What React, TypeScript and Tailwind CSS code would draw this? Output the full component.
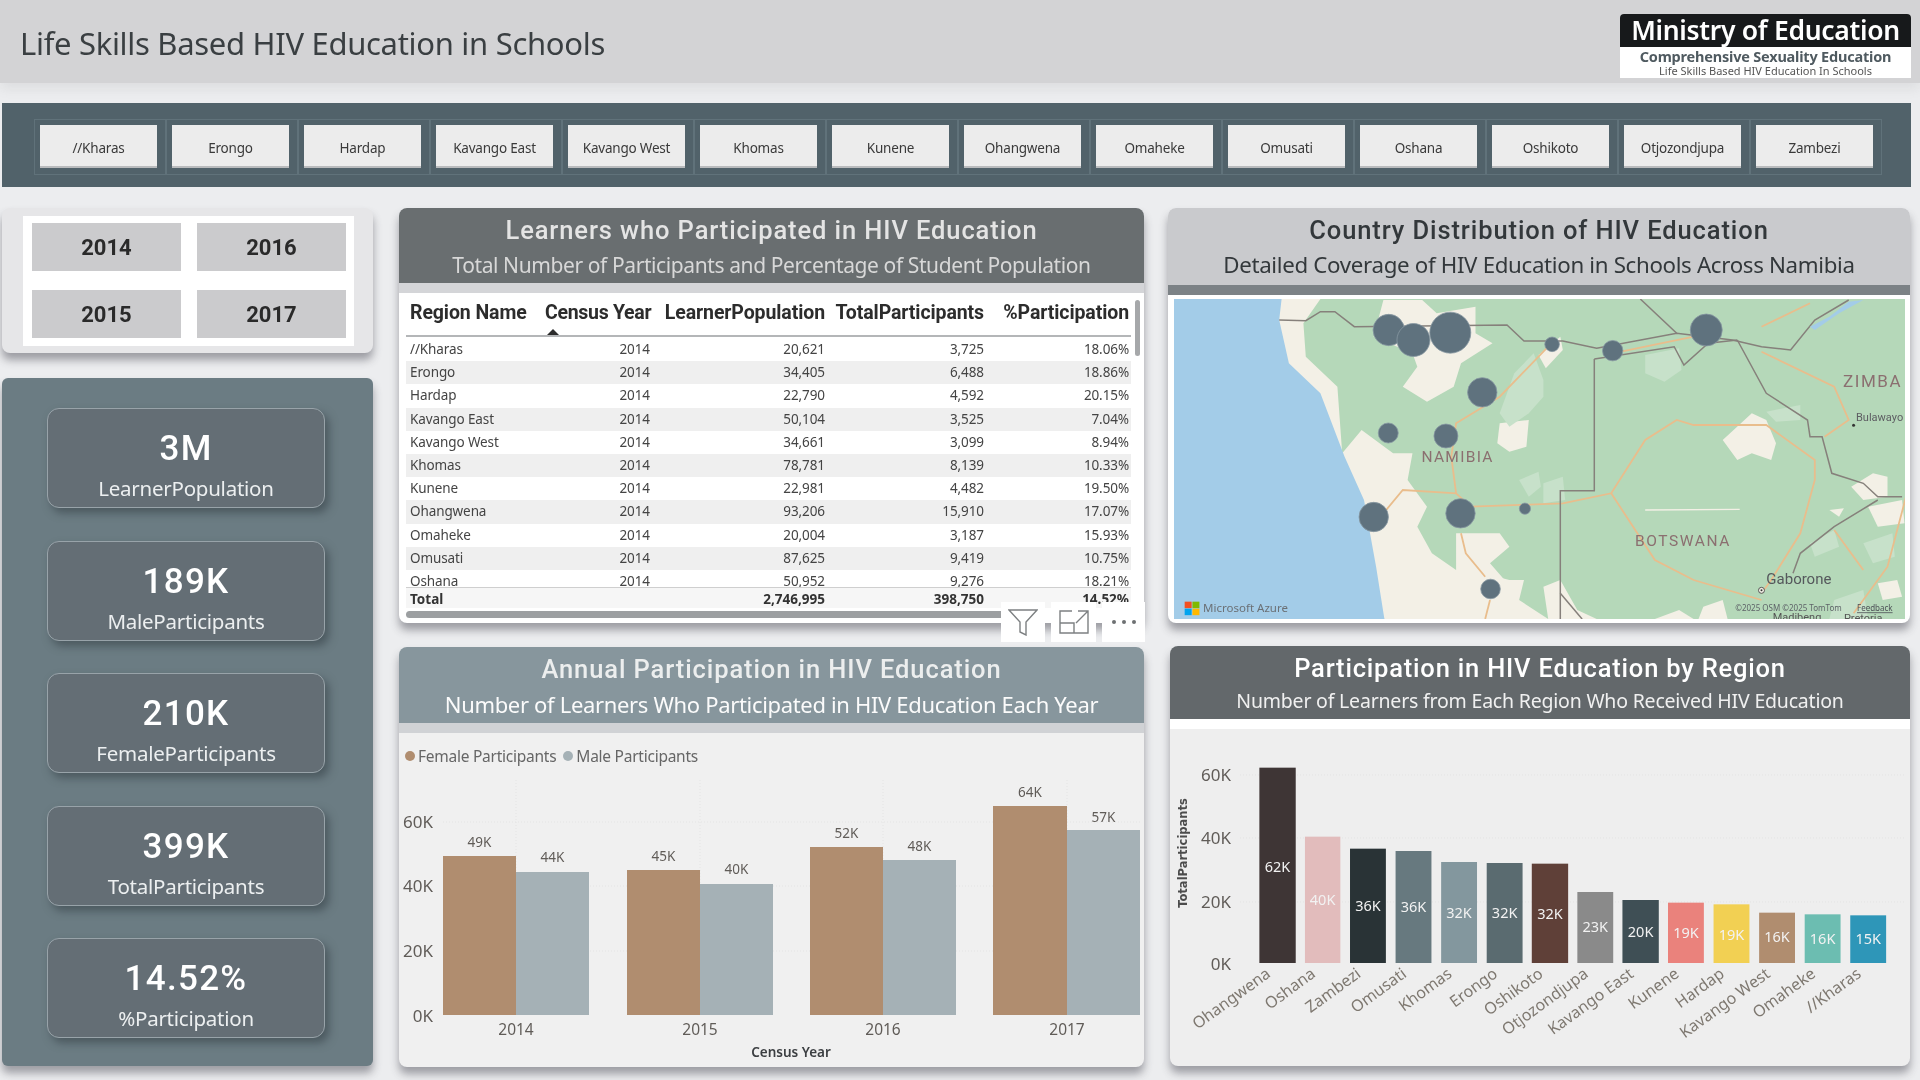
import React from "react";

const regions = ["//Kharas","Erongo","Hardap","Kavango East","Kavango West","Khomas","Kunene","Ohangwena","Omaheke","Omusati","Oshana","Oshikoto","Otjozondjupa","Zambezi"];

const rows = [
  ["//Kharas","20,621","3,725","18.06%"],["Erongo","34,405","6,488","18.86%"],["Hardap","22,790","4,592","20.15%"],
  ["Kavango East","50,104","3,525","7.04%"],["Kavango West","34,661","3,099","8.94%"],["Khomas","78,781","8,139","10.33%"],
  ["Kunene","22,981","4,482","19.50%"],["Ohangwena","93,206","15,910","17.07%"],["Omaheke","20,004","3,187","15.93%"],
  ["Omusati","87,625","9,419","10.75%"],["Oshana","50,952","9,276","18.21%"],
];

const kpis = [["3M","LearnerPopulation"],["189K","MaleParticipants"],["210K","FemaleParticipants"],["399K","TotalParticipants"],["14.52%","%Participation"]];

// map drawing: coordinates measured on a 2.063 x 3 grid
const mx = (x: number) => (x - 28) / 2.063;
const my = (y: number) => (y - 57) / 3;
const path = (p: number[], close = false) => {
  let s = "";
  for (let i = 0; i < p.length; i += 2) s += (i ? "L" : "M") + mx(p[i]).toFixed(1) + " " + my(p[i + 1]).toFixed(1);
  return s + (close ? "Z" : "");
};
const ocean = [28,57,250,57,245,120,265,250,330,340,380,530,420,660,445,860,462,1017,28,1017];
const sand = [
  [250,57,330,57,295,130,300,230,365,320,375,520,415,450,480,520,520,520,510,600,550,680,530,740,560,820,610,870,610,760,700,760,720,800,680,850,710,900,750,900,740,960,800,1017,462,1017,300,600,200,60],
  [460,60,540,60,570,100,650,80,650,160,685,190,620,250,605,320,550,365,500,320,530,260,520,220,440,170],
  [700,430,760,420,755,500,720,515,695,490],
  [780,225,800,200,825,170,830,210,795,265],
  [1160,480,1220,400,1250,420,1270,490,1260,540,1220,520,1190,540],
  [1425,620,1470,580,1500,590,1500,650,1450,660],
  [1460,680,1530,660,1535,730,1480,740],
  [1380,690,1410,685,1400,710],
  [790,920,825,900,860,990,900,1017,800,1017],
  [1480,910,1520,900,1530,950,1490,960],
  [1120,980,1160,960,1170,1017,1110,1017],
  [1020,1017,1070,990,1100,1017],
  [640,870,720,900,700,960,630,950],
  [1000,688,1195,686,1195,690,1000,692],
];
const pale = [
  [730,280,770,220,790,300,790,350,760,400,720,440,700,400],
  [1000,225,1070,205,1075,270,1040,305,1000,280],
  [740,600,780,575,785,620,760,650],
  [790,610,830,590,835,660,790,670],
  [1250,395,1320,375,1320,420,1270,425],
  [1340,790,1390,750,1400,800,1350,830],
  [1450,790,1510,760,1515,830,1470,850],
  [1390,960,1450,930,1460,1017,1380,1017],
];
const borders = [
  [245,120,300,122,330,95,360,95,400,140,715,135,750,183,830,183,900,205,1065,160,1180,180,1240,200,1300,210,1350,120,1420,60],
  [895,237,1060,200,1080,255,1130,190,1190,180],
  [895,237,895,632,825,632,825,1017],
  [990,57,1065,160],
  [1190,180,1250,340,1335,420,1340,470,1365,470,1385,580,1450,610,1480,650,1530,650],
  [1480,660,1390,740,1320,820,1305,880],
  [825,940,870,1017],
];
const roads = [
  [800,200,700,350,610,430,600,530,610,640,500,630,460,700],
  [610,640,640,680,830,670,930,640,1000,480,1065,420,1100,435,1250,435,1350,540,1350,600,1320,760,1260,900,1240,940],
  [930,640,1020,840,1100,900,1240,960],
  [1240,215,1390,320,1420,420,1370,470],
  [620,760,630,820,670,890],
  [680,960,670,1017],
  [1430,1000,1500,860,1540,640],
  [1390,750,1450,870],
  [950,215,1100,170],
  [1240,140,1340,70],
];
const bubbles = [[471,150,15.7],[522,180,16.5],[598,158,20.5],[808,193,7.3],[933,212,10.2],[1126,150,16],[664,337,14.7],[470,459,10],[589,468,12],[440,711,14.7],[619,700,14.7],[752,686,5.6],[681,927,9.8]];

const annual = [
  { year: "2014", f: [443, 516, 856, "49K", 842], m: [516, 589, 872, "44K", 857] },
  { year: "2015", f: [627, 700, 870, "45K", 856], m: [700, 773, 884, "40K", 869] },
  { year: "2016", f: [810, 883, 847, "52K", 833], m: [883, 956, 860, "48K", 846] },
  { year: "2017", f: [993, 1067, 806, "64K", 792], m: [1067, 1140, 830, "57K", 817] },
] as const;

const regionBars: [string, number, number, number, string, number, string][] = [
  ["Ohangwena",205,280,383,"62K",680,"#3e3535"],["Oshana",299,372,590,"40K",780,"#e2bcbc"],["Zambezi",392,466,626,"36K",797,"#293336"],
  ["Omusati",486,560,633,"36K",800,"#67797f"],["Khomas",580,654,666,"32K",820,"#83979e"],["Erongo",674,748,669,"32K",820,"#5a6b70"],
  ["Oshikoto",767,842,671,"32K",823,"#5f4038"],["Otjozondjupa",861,935,756,"23K",862,"#8a8a8a"],["Kavango East",954,1029,780,"20K",877,"#3f4f55"],
  ["Kunene",1048,1122,788,"19K",880,"#ea827c"],["Hardap",1142,1216,793,"19K",884,"#f2d053"],["Kavango West",1236,1310,818,"16K",892,"#b08d6f"],
  ["Omaheke",1330,1404,823,"16K",896,"#6cbdb1"],["//Kharas",1424,1498,826,"15K",897,"#2e96b8"],
];
const rx = (x: number) => x / 2.063;
const ry = (y: number) => y / 3;

const shadow = "shadow-[0_7px_8px_rgba(60,60,70,0.45)]";
const titleFont = "font-['Roboto',sans-serif]";
const bodyFont = "font-['Noto_Sans',sans-serif]";

function PanelHeader({ title, sub, bg, strip, titleCls, subCls, h, stripH }: { title: string; sub: string; bg: string; strip: string; titleCls: string; subCls: string; h: string; stripH: string }) {
  return (
    <>
      <div className={`${bg} ${h} flex flex-col items-center rounded-t-lg pt-[6px] shrink-0`}>
        <div className={`${titleFont} font-medium text-[25.5px] leading-[32px] tracking-[0.9px] ${titleCls}`}>{title}</div>
        <div className={`${bodyFont} leading-[34px] mt-[2px] ${subCls}`}>{sub}</div>
      </div>
      <div className={`${strip} ${stripH} shrink-0`} />
    </>
  );
}

function TableBlock() {
  return (
    <div className={`relative w-[745px] h-[415px] bg-white rounded-lg flex flex-col ${shadow}`}>
      <PanelHeader title="Learners who Participated in HIV Education" sub="Total Number of Participants and Percentage of Student Population" bg="bg-[#696e70]" strip="bg-[#d4d5d8]" titleCls="text-[#e4e4e4]" subCls="text-[#d8d8d8] text-[21px] tracking-[-0.4px]" h="h-[75px]" stripH="h-[10px]" />
      <div className="pl-[7px] pt-[8px] flex flex-col">
        <div className={`w-[725px] h-[36px] grid grid-cols-[135px_111px_175px_159px_145px] items-start border-b-2 border-[#b4b6b8] ${titleFont} font-bold text-[19.5px] leading-[24px] tracking-[-0.1px] text-[#2c2c2c]`}>
          <div className="pl-[4px] whitespace-nowrap">Region Name</div>
          <div className="relative pl-[4px] whitespace-nowrap tracking-[-0.3px]">Census Year<div className="absolute left-[6px] top-[28px] w-0 h-0 border-l-[6px] border-r-[6px] border-b-[6px] border-l-transparent border-r-transparent border-b-[#2c2c2c]" /></div>
          <div className="text-right pr-[2px] whitespace-nowrap">LearnerPopulation</div>
          <div className="text-right pr-[2px] whitespace-nowrap">TotalParticipants</div>
          <div className="text-right pr-[2px] whitespace-nowrap">%Participation</div>
        </div>
        <div className={`w-[725px] h-[250px] overflow-hidden pt-[1px] ${bodyFont} text-[13.5px] tracking-[-0.1px] text-[#444]`}>
          {rows.map((r, i) => (
            <div key={r[0]} className={`h-[23.2px] leading-[23.2px] grid grid-cols-[135px_111px_175px_159px_145px] ${i % 2 ? "bg-[#efefef]" : "bg-white"}`}>
              <div className="pl-[4px] whitespace-nowrap">{r[0]}</div>
              <div className="text-right pr-[2px]">2014</div>
              <div className="text-right pr-[2px]">{r[1]}</div>
              <div className="text-right pr-[2px]">{r[2]}</div>
              <div className="text-right pr-[2px]">{r[3]}</div>
            </div>
          ))}
        </div>
        <div className={`w-[725px] h-[21px] leading-[22px] grid grid-cols-[135px_111px_175px_159px_145px] bg-[#f6f6f6] border-t border-[#cfcfcf] ${bodyFont} font-bold text-[13.5px] text-[#333] overflow-hidden`}>
          <div className="pl-[4px]">Total</div>
          <div />
          <div className="text-right pr-[2px]">2,746,995</div>
          <div className="text-right pr-[2px]">398,750</div>
          <div className="text-right pr-[2px]">14.52%</div>
        </div>
        <div className="w-[600px] h-[7px] mt-[3px] bg-[#9c9fa1] rounded-full" />
      </div>
      <div className="absolute left-[736px] top-[92px] w-[5px] h-[56px] rounded-full bg-[#a6a8aa]" />
      <div className="absolute left-[602px] top-[394px] flex gap-[6px]">
        <div className="w-[44px] h-[40px] bg-white flex items-center justify-center">
          <svg width="30" height="27" viewBox="0 0 30 27" fill="none" stroke="#7d8082" strokeWidth="1.4"><path d="M1 1H29L18 13V26L12 23V13Z" /></svg>
        </div>
        <div className="w-[45px] h-[40px] bg-white flex items-center justify-center">
          <svg width="30" height="24" viewBox="0 0 30 24" fill="none" stroke="#7d8082" strokeWidth="1.4"><path d="M13 1H1V23H29V9M1 13H15V23M19 1H29V9M29 1L17 13" /></svg>
        </div>
        <div className="w-[43px] h-[40px] bg-white flex items-center justify-center gap-[6px]">
          <div className="w-[4px] h-[4px] rounded-full bg-[#6d7072]" />
          <div className="w-[4px] h-[4px] rounded-full bg-[#6d7072]" />
          <div className="w-[4px] h-[4px] rounded-full bg-[#6d7072]" />
        </div>
      </div>
    </div>
  );
}

function MapSvg() {
  const text = { fontFamily: "Roboto, sans-serif" };
  return (
    <svg width="731" height="320" viewBox="0 0 731 320" className="block">
      <rect width="731" height="320" fill="#b5d8b9" />
      {sand.map((p, i) => <path key={i} d={path(p, true)} fill="#f3f0e6" />)}
      <path d={path(ocean, true)} fill="#a3cce8" />
      {pale.map((p, i) => <path key={i} d={path(p, true)} fill="#c7e1ca" />)}
      {roads.map((p, i) => <path key={i} d={path(p)} fill="none" stroke="#e9bd8c" strokeWidth="1.8" />)}
      {borders.map((p, i) => <path key={i} d={path(p)} fill="none" stroke="#86807b" strokeWidth="1.5" />)}
      <path d={path([1340,140,1380,110,1420,65,1450,60,1400,100,1350,150], true)} fill="#a3cce8" />
      {bubbles.map((b, i) => <circle key={i} cx={mx(b[0])} cy={my(b[1])} r={b[2]} fill="#5f727e" stroke="#8898a2" strokeWidth="0.8" />)}
      <text x={mx(613)} y={my(545)} textAnchor="middle" fontSize="15.5" letterSpacing="1.3" fill="#8b6f70" style={text}>NAMIBIA</text>
      <text x={mx(1078)} y={my(797)} textAnchor="middle" fontSize="15.5" letterSpacing="1.6" fill="#8b6f70" style={text}>BOTSWANA</text>
      <text x={mx(1408)} y={my(320)} fontSize="17" letterSpacing="1.6" fill="#8b6f70" style={text}>ZIMBA</text>
      <text x={mx(1435)} y={my(422)} fontSize="11" fill="#5d5d62" style={text}>Bulawayo</text>
      <circle cx={mx(1430)} cy={my(436)} r="1.5" fill="#333" />
      <text x={mx(1250)} y={my(912)} fontSize="15" fill="#55585c" style={text}>Gaborone</text>
      <circle cx={mx(1240)} cy={my(931)} r="3" fill="#f3f0e6" stroke="#555" />
      <circle cx={mx(1240)} cy={my(931)} r="1" fill="#333" />
      <text x={mx(1263)} y={my(1022)} fontSize="11" fill="#555" style={text}>Madibeng</text>
      <text x={mx(1410)} y={my(1026)} fontSize="11" fill="#555" style={text}>Pretoria</text>
      <rect x={mx(50)} y={my(965)} width="7" height="6.5" fill="#f25022" />
      <rect x={mx(66)} y={my(965)} width="7" height="6.5" fill="#7fba00" />
      <rect x={mx(50)} y={my(986)} width="7" height="6.5" fill="#00a4ef" />
      <rect x={mx(66)} y={my(986)} width="7" height="6.5" fill="#ffb900" />
      <text x={mx(88)} y={my(996)} fontSize="11.5" fill="#6b7075" fontFamily="Noto Sans, sans-serif">Microsoft Azure</text>
      <text x={mx(1186)} y={my(994)} fontSize="8" fill="#5e6368" fontFamily="Noto Sans, sans-serif">©2025 OSM  ©2025 TomTom</text>
      <text x={mx(1437)} y={my(994)} fontSize="8" fill="#4d5156" fontFamily="Noto Sans, sans-serif" textDecoration="underline">Feedback</text>
    </svg>
  );
}

function AnnualChart() {
  const ox = 399, oy = 733;
  const font = { fontFamily: "Noto Sans, sans-serif" };
  return (
    <svg width="745" height="334" viewBox={`${ox} ${oy} 745 334`} className="block">
      {[822, 886, 951].map(y => <line key={y} x1="443" x2="1140" y1={y} y2={y} stroke="#e4e4e4" strokeDasharray="1 2" />)}
      {[516, 700, 883, 1067].map(x => <line key={x} x1={x} x2={x} y1="780" y2="1015" stroke="#e4e4e4" strokeDasharray="1 2" />)}
      {annual.map(g => (
        <g key={g.year}>
          <rect x={g.f[0]} y={g.f[2]} width={g.f[1] - g.f[0]} height={1015 - g.f[2]} fill="#b08d6f" />
          <rect x={g.m[0]} y={g.m[2]} width={g.m[1] - g.m[0]} height={1015 - g.m[2]} fill="#a5b1b6" />
          <text x={(g.f[0] + g.f[1]) / 2} y={g.f[4] + 5} textAnchor="middle" fontSize="13.5" fill="#605c58" style={font}>{g.f[3]}</text>
          <text x={(g.m[0] + g.m[1]) / 2} y={g.m[4] + 5} textAnchor="middle" fontSize="13.5" fill="#605c58" style={font}>{g.m[3]}</text>
          <text x={g.f[1]} y="1035" textAnchor="middle" fontSize="15.5" fill="#605c58" style={font}>{g.year}</text>
        </g>
      ))}
      {[["60K", 822], ["40K", 886], ["20K", 951], ["0K", 1016]].map(([t, y]) => (
        <text key={t} x="433" y={Number(y) + 6} textAnchor="end" fontSize="17" fill="#605c58" style={font}>{t}</text>
      ))}
      <text x="791" y="1057" textAnchor="middle" fontSize="13.5" fontWeight="600" fill="#3c3f42" style={font}>Census Year</text>
    </svg>
  );
}

function RegionChart() {
  const ox = 1170, oy = 729;
  const font = { fontFamily: "Noto Sans, sans-serif" };
  return (
    <svg width="740" height="337" viewBox={`${ox} ${oy} 740 337`} className="block">
      {[775, 838, 902].map(y => <line key={y} x1="1240" x2="1905" y1={y} y2={y} stroke="#e3e3e3" strokeDasharray="1 2" />)}
      {[["60K", 775], ["40K", 838], ["20K", 902], ["0K", 964]].map(([t, y]) => (
        <text key={t} x="1231" y={Number(y) + 6} textAnchor="end" fontSize="17" fill="#605c58" style={font}>{t}</text>
      ))}
      <text transform="translate(1187 853) rotate(-90)" textAnchor="middle" fontSize="11.5" fontWeight="700" fill="#4c4c4c" fontFamily="DejaVu Sans, sans-serif">TotalParticipants</text>
      {regionBars.map(b => {
        const x0 = 1160 + rx(b[1]), x1 = 1160 + rx(b[2]), top = 640 + ry(b[3]);
        const cx = (x0 + x1) / 2;
        return (
          <g key={b[0]}>
            <rect x={x0} y={top} width={x1 - x0} height={963 - top} fill={b[6]} />
            <text x={cx} y={640 + ry(b[5]) + 5} textAnchor="middle" fontSize="14.5" fill="#f2f2f2" style={font}>{b[4]}</text>
            <text transform={`translate(${cx - 6} 976) rotate(-36)`} textAnchor="end" fontSize="16" fill="#7e7870" style={font}>{b[0]}</text>
          </g>
        );
      })}
    </svg>
  );
}

export default function App() {
  return (
    <div className="w-[1920px] h-[1080px] overflow-hidden bg-[#ecedef] flex flex-col blur-[0.4px]">
      <header className="h-[83px] shrink-0 bg-[#d3d3d5] flex items-start justify-between pl-[20px] pr-[9px] shadow-[0_6px_10px_rgba(120,120,125,0.12)]">
        <h1 className={`${bodyFont} text-[31px] leading-[42px] mt-[22px] tracking-[-0.3px] text-[#3a3f42]`}>Life Skills Based HIV Education in Schools</h1>
        <div className="w-[291px] h-[64px] mt-[14px] bg-white flex flex-col items-center rounded-t-sm">
          <div className={`w-full h-[33px] shrink-0 bg-[#17191b] text-center text-white ${bodyFont} font-semibold text-[26.5px] leading-[33px] tracking-[-0.3px] whitespace-nowrap rounded-t-sm`}>Ministry of Education</div>
          <div className={`h-[18px] ${bodyFont} font-bold text-[14.5px] leading-[18px] tracking-[-0.2px] text-[#4f5a60] whitespace-nowrap`}>Comprehensive Sexuality Education</div>
          <div className={`h-[12px] ${bodyFont} text-[11px] leading-[12px] text-[#555] whitespace-nowrap`}>Life Skills Based HIV Education In Schools</div>
        </div>
      </header>

      <nav className="mt-[20px] ml-[2px] w-[1909px] h-[84px] shrink-0 bg-[#51626a] pl-[32px] pt-[16px] flex">
        {regions.map(r => (
          <div key={r} className="w-[132px] h-[56px] shrink-0 border border-[#60727a] pl-[5px] pt-[5px]">
            <button className={`w-[117px] h-[43px] bg-[#ececec] border-b-2 border-[#b9bbbd] ${bodyFont} text-[13.5px] leading-[20px] pt-[4px] tracking-[-0.2px] text-[#3a3a3a]`}>{r}</button>
          </div>
        ))}
      </nav>

      <main className="mt-[21px] flex items-start">
        <div className="ml-[2px] w-[371px] flex flex-col gap-[25px] shrink-0">
          <div className={`h-[145px] bg-[#e6e6e8] rounded-lg pl-[21px] pt-[8px] ${shadow}`}>
            <div className="w-[331px] h-[130px] bg-white grid grid-cols-2 grid-rows-2">
              {["2014", "2016", "2015", "2017"].map((y, i) => (
                <div key={y} className={`flex ${i < 2 ? "items-start pt-[7px]" : "items-end pb-[8px]"} ${i % 2 ? "justify-end pr-[8px]" : "justify-start pl-[9px]"}`}>
                  <div className={`w-[149px] h-[48px] bg-[#cbcbcd] flex items-center justify-center ${titleFont} font-bold text-[22px] text-[#2a2a2a]`}>{y}</div>
                </div>
              ))}
            </div>
          </div>
          <div className={`h-[688px] bg-[#6b7c83] rounded-md pl-[45px] pt-[30px] flex flex-col gap-[32.5px] ${shadow}`}>
            {kpis.map(([v, l]) => (
              <div key={l} className="w-[278px] h-[100px] shrink-0 bg-[#646e75] border border-[#98a3a9] rounded-xl flex flex-col items-center shadow-[4px_5px_8px_rgba(50,60,66,0.55)] pt-[19px]">
                <div className={`${titleFont} font-medium text-[35px] leading-[42px] tracking-[1.3px] text-white`}>{v}</div>
                <div className={`${bodyFont} text-[20.5px] leading-[30px] mt-[3px] tracking-[-0.25px] text-[#eceff0]`}>{l}</div>
              </div>
            ))}
          </div>
        </div>

        <div className="ml-[26px] w-[745px] flex flex-col gap-[24px] shrink-0">
          <TableBlock />
          <div className={`h-[420px] bg-[#f0f0f0] rounded-lg flex flex-col relative ${shadow}`}>
            <PanelHeader title="Annual Participation in HIV Education" sub="Number of Learners Who Participated in HIV Education Each Year" bg="bg-[#87969d]" strip="bg-[#d0d2d5]" titleCls="text-[#eceeee]" subCls="text-[#fbfbfb] text-[22px] tracking-[-0.33px]" h="h-[76px]" stripH="h-[10px]" />
            <div className={`absolute left-[6px] top-[99px] flex items-center ${bodyFont} text-[15.5px] leading-[20px] tracking-[-0.25px] text-[#666]`}>
              <span className="w-[10px] h-[10px] rounded-full bg-[#b08d6f] mr-[3px]" /><span className="mr-[7px]">Female Participants</span>
              <span className="w-[10px] h-[10px] rounded-full bg-[#a5b1b6] mr-[3px]" /><span>Male Participants</span>
            </div>
            <AnnualChart />
          </div>
        </div>

        <div className="ml-[24px] w-[742px] flex flex-col gap-[23px] shrink-0">
          <div className={`h-[415px] bg-white rounded-lg flex flex-col ${shadow}`}>
            <PanelHeader title="Country Distribution of HIV Education" sub="Detailed Coverage of HIV Education in Schools Across Namibia" bg="bg-[#c9cacd]" strip="bg-[#7c8286]" titleCls="text-[#33383b]" subCls="text-[#33383b] text-[22.3px] tracking-[-0.33px]" h="h-[77px]" stripH="h-[10px]" />
            <div className="pl-[6px] pt-[4px]"><MapSvg /></div>
          </div>
          <div className={`ml-[2px] w-[740px] h-[420px] bg-[#eeeeee] rounded-lg flex flex-col ${shadow}`}>
            <div className="h-[73px] bg-[#63686b] rounded-t-lg flex flex-col items-center pt-[6px] shrink-0">
              <div className={`${titleFont} font-medium text-[25.5px] leading-[32px] tracking-[0.8px] text-white`}>Participation in HIV Education by Region</div>
              <div className={`${bodyFont} text-[19.5px] leading-[30px] tracking-[-0.2px] mt-[2px] text-[#f0f0f0]`}>Number of Learners from Each Region Who Received HIV Education</div>
            </div>
            <div className="h-[10px] bg-white shrink-0" />
            <RegionChart />
          </div>
        </div>
      </main>
    </div>
  );
}
